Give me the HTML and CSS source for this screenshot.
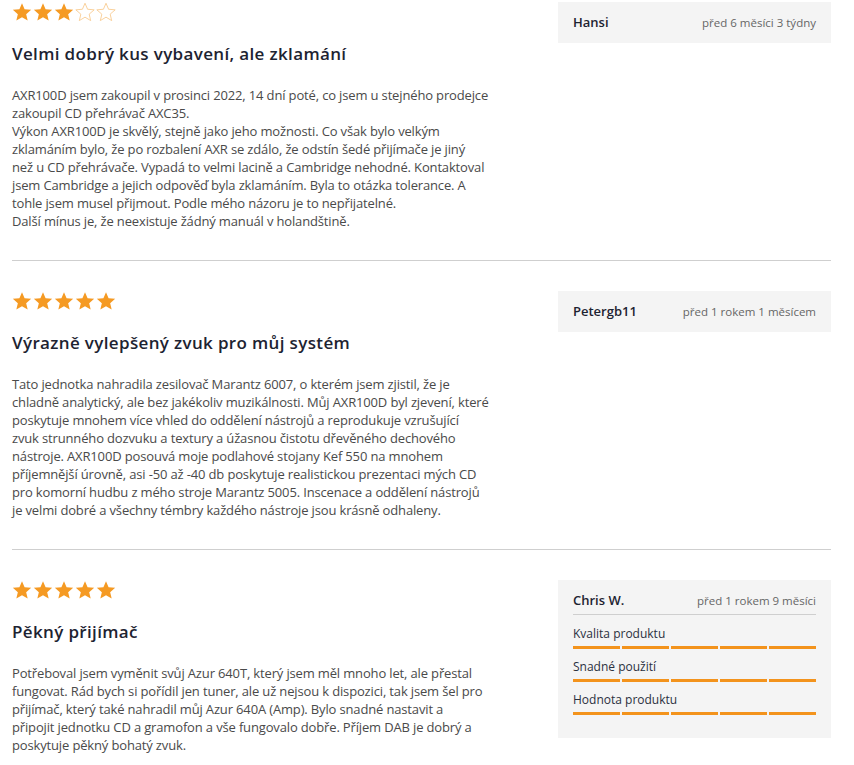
FILE: index.html
```html
<!DOCTYPE html>
<html lang="cs">
<head>
  <meta charset="UTF-8" />
  <meta name="viewport" content="width=device-width, initial-scale=1.0" />
  <title>Recenze</title>
  <link rel="stylesheet" href="styles.css">
</head>
<body>
  <div class="reviews">

    <div class="review">
      <div class="review-main">
        <div class="stars">
          <svg class="star"><use href="#star-full"/></svg>
          <svg class="star"><use href="#star-full"/></svg>
          <svg class="star"><use href="#star-full"/></svg>
          <svg class="star"><use href="#star-empty"/></svg>
          <svg class="star"><use href="#star-empty"/></svg>
        </div>
        <h3>Velmi dobrý kus vybavení, ale zklamání</h3>
        <p>AXR100D jsem zakoupil v prosinci 2022, 14 dní poté, co jsem u stejného prodejce<br />
        zakoupil CD přehrávač AXC35.<br />
        Výkon AXR100D je skvělý, stejně jako jeho možnosti. Co však bylo velkým<br />
        zklamáním bylo, že po rozbalení AXR se zdálo, že odstín šedé přijímače je jiný<br />
        než u CD přehrávače. Vypadá to velmi lacině a Cambridge nehodné. Kontaktoval<br />
        jsem Cambridge a jejich odpověď byla zklamáním. Byla to otázka tolerance. A<br />
        tohle jsem musel přijmout. Podle mého názoru je to nepřijatelné.<br />
        Další mínus je, že neexistuje žádný manuál v holandštině.</p>
      </div>
      <div class="author">
        <div class="author-head">
          <span class="name">Hansi</span>
          <span class="date">před 6 měsíci 3 týdny</span>
        </div>
      </div>
    </div>

    <div class="review">
      <div class="review-main">
        <div class="stars">
          <svg class="star"><use href="#star-full"/></svg>
          <svg class="star"><use href="#star-full"/></svg>
          <svg class="star"><use href="#star-full"/></svg>
          <svg class="star"><use href="#star-full"/></svg>
          <svg class="star"><use href="#star-full"/></svg>
        </div>
        <h3>Výrazně vylepšený zvuk pro můj systém</h3>
        <p>Tato jednotka nahradila zesilovač Marantz 6007, o kterém jsem zjistil, že je<br />
        chladně analytický, ale bez jakékoliv muzikálnosti. Můj AXR100D byl zjevení, které<br />
        poskytuje mnohem více vhled do oddělení nástrojů a reprodukuje vzrušující<br />
        zvuk strunného dozvuku a textury a úžasnou čistotu dřevěného dechového<br />
        nástroje. AXR100D posouvá moje podlahové stojany Kef 550 na mnohem<br />
        příjemnější úrovně, asi -50 až -40 db poskytuje realistickou prezentaci mých CD<br />
        pro komorní hudbu z mého stroje Marantz 5005. Inscenace a oddělení nástrojů<br />
        je velmi dobré a všechny témbry každého nástroje jsou krásně odhaleny.</p>
      </div>
      <div class="author">
        <div class="author-head">
          <span class="name">Petergb11</span>
          <span class="date">před 1 rokem 1 měsícem</span>
        </div>
      </div>
    </div>

    <div class="review">
      <div class="review-main">
        <div class="stars">
          <svg class="star"><use href="#star-full"/></svg>
          <svg class="star"><use href="#star-full"/></svg>
          <svg class="star"><use href="#star-full"/></svg>
          <svg class="star"><use href="#star-full"/></svg>
          <svg class="star"><use href="#star-full"/></svg>
        </div>
        <h3>Pěkný přijímač</h3>
        <p>Potřeboval jsem vyměnit svůj Azur 640T, který jsem měl mnoho let, ale přestal<br />
        fungovat. Rád bych si pořídil jen tuner, ale už nejsou k dispozici, tak jsem šel pro<br />
        přijímač, který také nahradil můj Azur 640A (Amp). Bylo snadné nastavit a<br />
        připojit jednotku CD a gramofon a vše fungovalo dobře. Příjem DAB je dobrý a<br />
        poskytuje pěkný bohatý zvuk.</p>
      </div>
      <div class="author author-scores">
        <div class="author-head">
          <span class="name">Chris W.</span>
          <span class="date">před 1 rokem 9 měsíci</span>
        </div>
        <div class="score">
          <div class="score-label">Kvalita produktu</div>
          <div class="bars"><i></i><i></i><i></i><i></i><i></i></div>
        </div>
        <div class="score">
          <div class="score-label">Snadné použití</div>
          <div class="bars"><i></i><i></i><i></i><i></i><i></i></div>
        </div>
        <div class="score">
          <div class="score-label">Hodnota produktu</div>
          <div class="bars"><i></i><i></i><i></i><i></i><i></i></div>
        </div>
      </div>
    </div>

  </div>

  <svg width="0" height="0" style="position:absolute">
    <defs>
      <symbol id="star-full" viewBox="0 0 24 24">
        <path d="M12 1.5l3.1 7.2 7.9.7-6 5.2 1.8 7.7L12 18.2l-6.8 4.1 1.8-7.7-6-5.2 7.9-.7z" fill="#f59a23"/>
      </symbol>
      <symbol id="star-empty" viewBox="0 0 24 24">
        <path d="M12 1.5l3.1 7.2 7.9.7-6 5.2 1.8 7.7L12 18.2l-6.8 4.1 1.8-7.7-6-5.2 7.9-.7z" fill="none" stroke="#f8c889" stroke-width="1"/>
      </symbol>
    </defs>
  </svg>
</body>
</html>
```

FILE: styles.css
```css
body {
  margin: 0;
  background: #fff;
  font-family: "Open Sans", "DejaVu Sans", sans-serif;
  color: #4a4a4a;
}
.reviews {
  width: 819px;
  margin-left: 12px;
}
.review {
  display: flex;
  justify-content: space-between;
  align-items: flex-start;
  padding: 30px 0;
  border-bottom: 1px solid #cfcfcf;
}
.review:first-child {
  padding-top: 2px;
}
.review:last-child {
  border-bottom: none;
}
.review-main {
  width: 494px;
}
.stars {
  display: flex;
  gap: 1px;
  height: 20px;
  align-items: center;
}
.star {
  width: 20px;
  height: 20px;
}
h3 {
  margin: 20px 0 20px;
  font-size: 17px;
  line-height: 24px;
  font-weight: 600;
  letter-spacing: 0.35px;
  color: #1d2331;
}
p {
  margin: 0;
  font-size: 13px;
  line-height: 18px;
  letter-spacing: -0.15px;
  color: #4a4a4a;
}
.author {
  width: 243px;
  background: #f4f4f4;
  padding: 10px 15px 11px 15px;
}
.author-head {
  display: flex;
  justify-content: space-between;
  align-items: center;
  height: 20px;
}
.name {
  font-size: 13px;
  font-weight: 600;
  color: #1d2331;
}
.date {
  font-size: 11.5px;
  color: #666;
}
.author-scores {
  padding-bottom: 13px;
}
.author-scores .author-head {
  padding-bottom: 4px;
  border-bottom: 1px solid #cfcfcf;
  margin-bottom: 11px;
}
.score {
  margin-bottom: 10px;
}
.score-label {
  font-size: 12px;
  line-height: 16px;
  color: #2b3040;
}
.bars {
  display: flex;
  gap: 2px;
  margin-top: 4px;
}
.bars i {
  flex: 1;
  height: 3px;
  background: #f3931c;
}
```
